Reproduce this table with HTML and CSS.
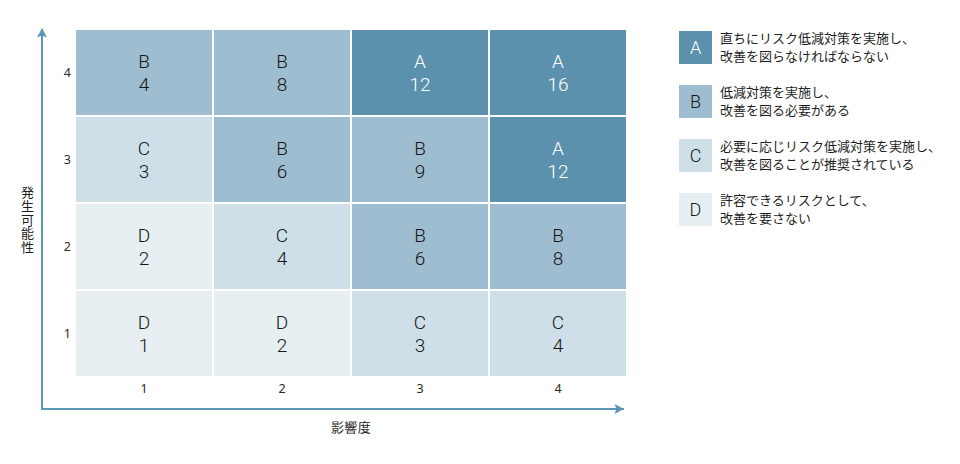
FILE: index.html
```html
<!DOCTYPE html>
<html lang="ja">
<head>
<meta charset="utf-8">
<title>リスクマトリクス</title>
<link rel="stylesheet" href="styles.css">
</head>
<body>
<div class="page">
  <div class="chart">
    <div class="chart-main">
      <div class="ylabel">発生可能性</div>
      <div class="plot">
        <svg class="arrow arrow-up" width="10" height="10" viewBox="0 0 10 10"><path d="M5 0 L10 9.5 L5 7.5 L0 9.5 Z"/></svg>
        <svg class="arrow arrow-right" width="10" height="10" viewBox="0 0 10 10"><path d="M10 5 L0.5 10 L2.5 5 L0.5 0 Z"/></svg>
        <div class="grid">
          <div class="rlabel">4</div>
          <div class="cell b">B<br>4</div>
          <div class="cell b">B<br>8</div>
          <div class="cell a">A<br>12</div>
          <div class="cell a">A<br>16</div>

          <div class="rlabel">3</div>
          <div class="cell c">C<br>3</div>
          <div class="cell b">B<br>6</div>
          <div class="cell b">B<br>9</div>
          <div class="cell a">A<br>12</div>

          <div class="rlabel">2</div>
          <div class="cell d">D<br>2</div>
          <div class="cell c">C<br>4</div>
          <div class="cell b">B<br>6</div>
          <div class="cell b">B<br>8</div>

          <div class="rlabel">1</div>
          <div class="cell d">D<br>1</div>
          <div class="cell d">D<br>2</div>
          <div class="cell c">C<br>3</div>
          <div class="cell c">C<br>4</div>

          <div class="corner"></div>
          <div class="clabel">1</div>
          <div class="clabel">2</div>
          <div class="clabel">3</div>
          <div class="clabel">4</div>
        </div>
      </div>
    </div>
    <div class="xlabel">影響度</div>
  </div>

  <ul class="legend">
    <li class="legend-item"><span class="key a">A</span><span class="desc">直ちにリスク低減対策を実施し、<br>改善を図らなければならない</span></li>
    <li class="legend-item"><span class="key b">B</span><span class="desc">低減対策を実施し、<br>改善を図る必要がある</span></li>
    <li class="legend-item"><span class="key c">C</span><span class="desc">必要に応じリスク低減対策を実施し、<br>改善を図ることが推奨されている</span></li>
    <li class="legend-item"><span class="key d">D</span><span class="desc">許容できるリスクとして、<br>改善を要さない</span></li>
  </ul>
</div>
</body>
</html>
```

FILE: styles.css
```css
* { box-sizing: border-box; }

html, body {
  margin: 0;
  padding: 0;
  background: #ffffff;
}

body {
  font-family: "Noto Sans CJK JP", "Noto Sans", sans-serif;
  color: #222222;
}

.page {
  display: flex;
  align-items: flex-start;
  padding-top: 29px;
}

.chart {
  display: flex;
  flex-direction: column;
}

.chart-main {
  display: flex;
  align-items: center;
}

.ylabel {
  writing-mode: vertical-rl;
  font-size: 13px;
  letter-spacing: 0.6px;
  line-height: 14px;
  width: 14px;
  margin-left: 20px;
  margin-right: 7px;
  color: #1e1e1e;
}

.plot {
  position: relative;
  width: 583px;
  border-left: 2px solid #5b97b5;
  border-bottom: 2px solid #5b97b5;
  padding-top: 1px;
}

.arrow {
  position: absolute;
  fill: #5b97b5;
}

.arrow-up {
  left: -6px;
  top: -1px;
}

.arrow-right {
  right: 0;
  bottom: -6px;
}

.grid {
  display: grid;
  grid-template-columns: 31px repeat(4, 136px);
  grid-template-rows: repeat(4, 85px) 30px;
  column-gap: 2px;
  row-gap: 2px;
  width: 581px;
}

.rlabel {
  font-family: "Noto Sans", sans-serif;
  font-size: 12.5px;
  color: #2a2a2a;
  padding-right: 3px;
  display: flex;
  align-items: center;
  justify-content: flex-end;
}

.cell {
  display: flex;
  align-items: center;
  justify-content: center;
  text-align: center;
  font-family: Roboto, "Noto Sans", sans-serif;
  font-weight: 300;
  font-size: 19px;
  line-height: 23px;
  color: #161616;
}

.a { background: #5b91ad; color: #ffffff; }
.b { background: #9fbdd0; }
.c { background: #cfdfe8; }
.d { background: #e8eff3; }

.clabel {
  font-family: "Noto Sans", sans-serif;
  font-size: 12.5px;
  line-height: 16px;
  padding-top: 3px;
  color: #2a2a2a;
  text-align: center;
}

.xlabel {
  margin-left: 76px;
  width: 550px;
  margin-top: 8px;
  text-align: center;
  font-size: 13px;
  line-height: 18px;
  letter-spacing: 0.3px;
  color: #1e1e1e;
}

.legend {
  list-style: none;
  margin: 0 0 0 53px;
  padding: 0;
  display: flex;
  flex-direction: column;
  gap: 18px;
}

.legend-item {
  display: flex;
  align-items: center;
  gap: 8px;
  height: 36px;
}

.key {
  width: 33px;
  height: 33px;
  display: flex;
  align-items: center;
  justify-content: center;
  font-family: Roboto, "Noto Sans", sans-serif;
  font-weight: 300;
  font-size: 18px;
  color: #161616;
  flex: none;
}

.key.a { color: #ffffff; }

.desc {
  font-size: 13px;
  line-height: 18px;
  color: #1e1e1e;
}
```
